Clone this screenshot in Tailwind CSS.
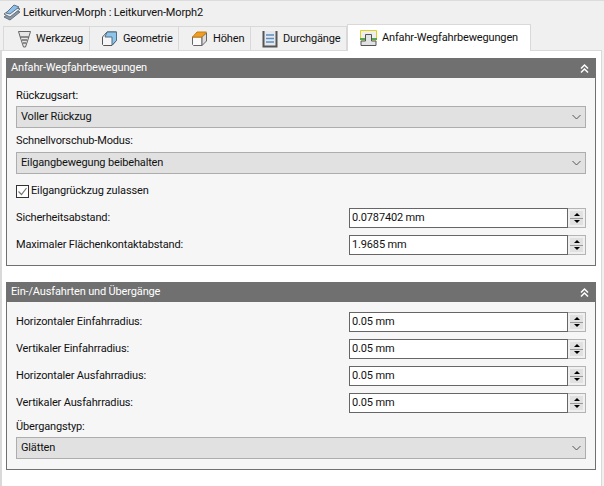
<!DOCTYPE html>
<html lang="de">
<head>
  <meta charset="UTF-8" />
  <title>Leitkurven-Morph</title>
  <script src="https://cdn.jsdelivr.net/npm/@tailwindcss/browser@4"></script>
</head>
<body class="w-[604px] h-[486px] overflow-hidden bg-[#f0f0f0] font-['Roboto','Open_Sans',sans-serif] text-[11px] tracking-[-0.15px] text-[#111] whitespace-nowrap">
  <!-- title -->
  <div class="h-[24px] border-t border-[#dcdcdc] flex items-center pl-[3px] gap-[2px]">
    <svg width="18" height="18" viewBox="0 0 18 18">
      <path d="M1 13 L11 6 L17 8 L7 16 Z" fill="#8b97a6" stroke="#66727f" />
      <path d="M1 10 L11 3 L17 5 L7 13 Z" fill="#eef1f4" stroke="#66727f" />
      <path d="M3 9 L11 1 L16 3 L7 10 Z" fill="#8cc0ea" stroke="#5f7388" />
    </svg>
    <span class="pt-px">Leitkurven-Morph : Leitkurven-Morph2</span>
  </div>

  <!-- tabs -->
  <div class="h-[26px] flex items-start pl-[3px] relative z-10">
    <div class="h-[24px] mt-[2px] w-[87px] flex items-center gap-[4px] pl-[13px] bg-[#f0f0f0] border border-b-0 border-[#d9d9d9]">
      <svg width="15" height="18" viewBox="0 0 15 18">
        <path d="M1.500 1.500 H13.500 L11.500 8 L8.500 17 H6.500 L3.500 8 Z" fill="#e6e6e6" stroke="#666" />
        <path d="M3.500 7 H11.500 M5 10 H10 M6 13 H9" stroke="#333" />
      </svg>
      <span class="pt-[2px]">Werkzeug</span>
    </div>
    <div class="h-[24px] mt-[2px] w-[89px] flex items-center gap-[5px] pl-[11px] bg-[#f0f0f0] border border-l-0 border-b-0 border-[#d9d9d9]">
      <svg width="17" height="17" viewBox="0 0 17 17">
        <path d="M1.500 7 L6 2 H15.500 V10.500 L11 15.500 H2.500 L1.500 14.500 Z" fill="#f6f6f6" stroke="#555" />
        <path d="M6 2 H15.500 V10.500 L11 15 V7 H4 Z" fill="#8fc4e8" stroke="#4f6f88" />
      </svg>
      <span class="pt-[2px]">Geometrie</span>
    </div>
    <div class="h-[24px] mt-[2px] w-[72px] flex items-center gap-[5px] pl-[12px] bg-[#f0f0f0] border border-l-0 border-b-0 border-[#d9d9d9]">
      <svg width="17" height="17" viewBox="0 0 17 17">
        <path d="M1.500 7 H11 V15.500 H2.500 L1.500 14.500 Z" fill="#fafafa" stroke="#666" />
        <path d="M11 7 L15.500 3 V11 L11 15.500 Z" fill="#ddd" stroke="#666" />
        <path d="M1.500 7 L6 2 H15.500 L11 7 Z" fill="#ef9d23" stroke="#c77f12" />
      </svg>
      <span class="pt-[2px]">Höhen</span>
    </div>
    <div class="h-[24px] mt-[2px] w-[96px] flex items-center gap-[5px] pl-[11px] bg-[#f0f0f0] border border-l-0 border-b-0 border-[#d9d9d9]">
      <svg width="16" height="18" viewBox="0 0 16 18">
        <path d="M1.500 1 V16.500 H14.500 V1" fill="#e4e8ee" stroke="#555" stroke-width="2" />
        <path d="M4 5 H12 M4 8.500 H12 M4 12 H12" stroke="#5b8fc0" stroke-width="1.500" />
      </svg>
      <span class="pt-[2px]">Durchgänge</span>
    </div>
    <div class="h-[27px] w-[184px] flex items-center gap-[5px] pl-[12px] bg-white border border-b-0 border-[#d9d9d9]">
      <svg width="17" height="17" viewBox="0 0 17 17">
        <path d="M0.500 0.500 H16.500 V10 H0.500 Z" fill="#eee" stroke="#dfd21a" />
        <path d="M0 9 H17" stroke="#52a84a" stroke-width="2" />
        <path d="M5.500 4.500 H11.500 V11 H16 V15.500 H1 V11 H5.500 Z" fill="#dfe3e3" stroke="#555" />
      </svg>
      <span class="pt-px">Anfahr-Wegfahrbewegungen</span>
    </div>
  </div>

  <!-- pane -->
  <div class="h-[436px] w-[602px] bg-white border-l-2 border-r border-t border-[#d9d9d9] border-b-0 pl-[4px] pr-[4px] pt-[7px] flex flex-col gap-[16px]">
    <section class="w-[590px] border border-t-0 border-[#707070] bg-[#f6f6f6]">
      <div class="h-[20px] -mx-px bg-[#707070] text-white flex items-center justify-between pl-[5px] pr-[6px]">
        <span class="pt-px">Anfahr-Wegfahrbewegungen</span>
        <svg width="11" height="11" viewBox="0 0 11 11" fill="none" stroke="#fff" stroke-width="1.500"><path d="M2 5.500 L5.500 2 L9 5.500 M2 9.500 L5.500 6 L9 9.500" /></svg>
      </div>
      <div class="px-[9px] pt-[8px] pb-[10px]">
        <div class="h-[20px] flex items-center">Rückzugsart:</div>
        <div class="h-[22px] border border-[#adadad] bg-[#e1e1e1] flex items-center justify-between pl-[4px] pr-[4px]">
          <span>Voller Rückzug</span>
          <svg width="9" height="6" viewBox="0 0 9 6" fill="none" stroke="#555"><path d="M0.500 1 L4.500 5 L8.500 1" /></svg>
        </div>
        <div class="h-[24px] flex items-center pt-[3px]">Schnellvorschub-Modus:</div>
        <div class="h-[22px] border border-[#adadad] bg-[#e1e1e1] flex items-center justify-between pl-[4px] pr-[4px]">
          <span>Eilgangbewegung beibehalten</span>
          <svg width="9" height="6" viewBox="0 0 9 6" fill="none" stroke="#555"><path d="M0.500 1 L4.500 5 L8.500 1" /></svg>
        </div>
        <div class="h-[20px] mt-[7px] flex items-center gap-[2px]">
          <div class="w-[13px] h-[13px] border border-[#333] bg-white flex items-center justify-center">
            <svg width="11" height="11" viewBox="0 0 11 11" fill="none" stroke="#777" stroke-width="1.200"><path d="M1.500 5.500 L4.500 8.500 L9.500 2" /></svg>
          </div>
          <span>Eilgangrückzug zulassen</span>
        </div>
        <div class="mt-[7px] flex flex-col gap-[7px]">
          <div class="h-[20px] flex items-center justify-between">
            <span>Sicherheitsabstand:</span>
            <div class="flex">
              <div class="w-[219px] h-[20px] border border-[#666] bg-white flex items-center pl-[2px]">0.0787402 mm</div>
              <div class="w-[18px] h-[20px] border border-l-0 border-[#b4b4b4] px-[2px] py-[2px] flex flex-col bg-[#f0f0f0]">
                <div class="flex-1 bg-[#e1e1e1] border-b border-[#999] flex items-center justify-center"><div class="border-x-[3px] border-x-transparent border-b-[3px] border-b-black"></div></div>
                <div class="flex-1 bg-[#e1e1e1] flex items-center justify-center"><div class="border-x-[3px] border-x-transparent border-t-[3px] border-t-black"></div></div>
              </div>
            </div>
          </div>
          <div class="h-[20px] flex items-center justify-between">
            <span>Maximaler Flächenkontaktabstand:</span>
            <div class="flex">
              <div class="w-[219px] h-[20px] border border-[#666] bg-white flex items-center pl-[2px]">1.9685 mm</div>
              <div class="w-[18px] h-[20px] border border-l-0 border-[#b4b4b4] px-[2px] py-[2px] flex flex-col bg-[#f0f0f0]">
                <div class="flex-1 bg-[#e1e1e1] border-b border-[#999] flex items-center justify-center"><div class="border-x-[3px] border-x-transparent border-b-[3px] border-b-black"></div></div>
                <div class="flex-1 bg-[#e1e1e1] flex items-center justify-center"><div class="border-x-[3px] border-x-transparent border-t-[3px] border-t-black"></div></div>
              </div>
            </div>
          </div>
        </div>
      </div>
    </section>

    <section class="w-[590px] border border-t-0 border-[#707070] bg-[#f6f6f6]">
      <div class="h-[20px] -mx-px bg-[#707070] text-white flex items-center justify-between pl-[5px] pr-[6px]">
        <span class="pt-px">Ein-/Ausfahrten und Übergänge</span>
        <svg width="11" height="11" viewBox="0 0 11 11" fill="none" stroke="#fff" stroke-width="1.500"><path d="M2 5.500 L5.500 2 L9 5.500 M2 9.500 L5.500 6 L9 9.500" /></svg>
      </div>
      <div class="px-[9px] pt-[10px] pb-[10px]">
        <div class="flex flex-col gap-[7px]">
          <div class="h-[20px] flex items-center justify-between">
            <span class="pt-px">Horizontaler Einfahrradius:</span>
            <div class="flex">
              <div class="w-[219px] h-[20px] border border-[#666] bg-white flex items-center pl-[2px]">0.05 mm</div>
              <div class="w-[18px] h-[20px] border border-l-0 border-[#b4b4b4] px-[2px] py-[2px] flex flex-col bg-[#f0f0f0]">
                <div class="flex-1 bg-[#e1e1e1] border-b border-[#999] flex items-center justify-center"><div class="border-x-[3px] border-x-transparent border-b-[3px] border-b-black"></div></div>
                <div class="flex-1 bg-[#e1e1e1] flex items-center justify-center"><div class="border-x-[3px] border-x-transparent border-t-[3px] border-t-black"></div></div>
              </div>
            </div>
          </div>
          <div class="h-[20px] flex items-center justify-between">
            <span class="pt-px">Vertikaler Einfahrradius:</span>
            <div class="flex">
              <div class="w-[219px] h-[20px] border border-[#666] bg-white flex items-center pl-[2px]">0.05 mm</div>
              <div class="w-[18px] h-[20px] border border-l-0 border-[#b4b4b4] px-[2px] py-[2px] flex flex-col bg-[#f0f0f0]">
                <div class="flex-1 bg-[#e1e1e1] border-b border-[#999] flex items-center justify-center"><div class="border-x-[3px] border-x-transparent border-b-[3px] border-b-black"></div></div>
                <div class="flex-1 bg-[#e1e1e1] flex items-center justify-center"><div class="border-x-[3px] border-x-transparent border-t-[3px] border-t-black"></div></div>
              </div>
            </div>
          </div>
          <div class="h-[20px] flex items-center justify-between">
            <span class="pt-px">Horizontaler Ausfahrradius:</span>
            <div class="flex">
              <div class="w-[219px] h-[20px] border border-[#666] bg-white flex items-center pl-[2px]">0.05 mm</div>
              <div class="w-[18px] h-[20px] border border-l-0 border-[#b4b4b4] px-[2px] py-[2px] flex flex-col bg-[#f0f0f0]">
                <div class="flex-1 bg-[#e1e1e1] border-b border-[#999] flex items-center justify-center"><div class="border-x-[3px] border-x-transparent border-b-[3px] border-b-black"></div></div>
                <div class="flex-1 bg-[#e1e1e1] flex items-center justify-center"><div class="border-x-[3px] border-x-transparent border-t-[3px] border-t-black"></div></div>
              </div>
            </div>
          </div>
          <div class="h-[20px] flex items-center justify-between">
            <span class="pt-px">Vertikaler Ausfahrradius:</span>
            <div class="flex">
              <div class="w-[219px] h-[20px] border border-[#666] bg-white flex items-center pl-[2px]">0.05 mm</div>
              <div class="w-[18px] h-[20px] border border-l-0 border-[#b4b4b4] px-[2px] py-[2px] flex flex-col bg-[#f0f0f0]">
                <div class="flex-1 bg-[#e1e1e1] border-b border-[#999] flex items-center justify-center"><div class="border-x-[3px] border-x-transparent border-b-[3px] border-b-black"></div></div>
                <div class="flex-1 bg-[#e1e1e1] flex items-center justify-center"><div class="border-x-[3px] border-x-transparent border-t-[3px] border-t-black"></div></div>
              </div>
            </div>
          </div>
        </div>
        <div class="h-[24px] flex items-center pt-[5px]">Übergangstyp:</div>
        <div class="h-[22px] border border-[#adadad] bg-[#e1e1e1] flex items-center justify-between pl-[4px] pr-[4px]">
          <span>Glätten</span>
          <svg width="9" height="6" viewBox="0 0 9 6" fill="none" stroke="#555"><path d="M0.500 1 L4.500 5 L8.500 1" /></svg>
        </div>
      </div>
    </section>
  </div>
</body>
</html>
